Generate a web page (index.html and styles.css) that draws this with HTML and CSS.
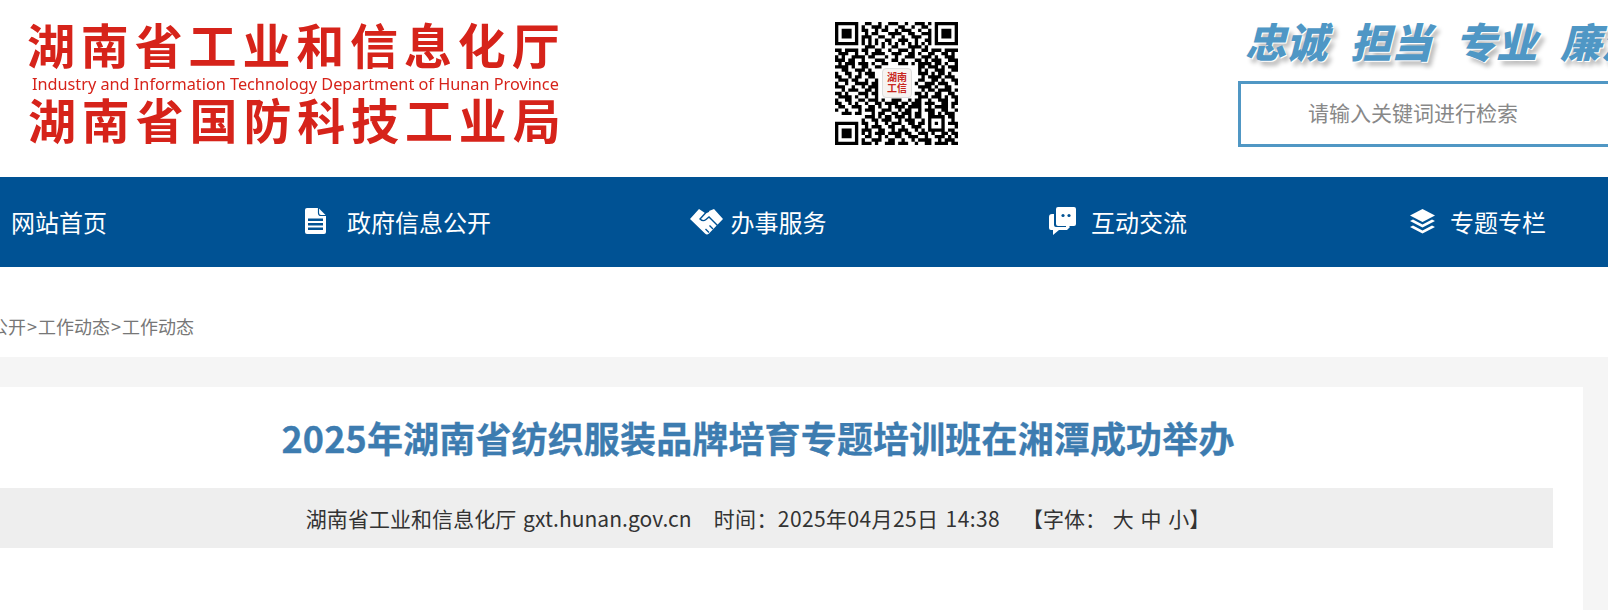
FILE: index.html
```html
<!DOCTYPE html>
<html lang="zh-CN">
<head>
  <meta charset="UTF-8" />
  <meta name="viewport" content="width=device-width, initial-scale=1.0" />
  <title>2025年湖南省纺织服装品牌培育专题培训班在湘潭成功举办</title>
  <link rel="stylesheet" href="styles.css">
</head>
<body>
  <header class="header">
    <div class="logo">
      <div class="logo-cn">湖南省工业和信息化厅</div>
      <div class="logo-en">Industry and Information Technology Department of Hunan Province</div>
      <div class="logo-cn logo-cn2">湖南省国防科技工业局</div>
    </div>

    <div class="qr">
      <svg class="qr-code" viewBox="0 0 37 37" width="123" height="123">
        <path fill="#000" fill-rule="evenodd" d="M0 0h7v7H0zM1 1v5h5V1zM2 2h3v3H2zM30 0h7v7h-7zM31 1v5h5V1zM32 2h3v3h-3zM0 30h7v7H0zM1 31v5h5v-5zM2 32h3v3H2z"/>
        <path stroke="#000" stroke-width="1" fill="none" d="M9 .5h2M13 .5h1M16 .5h3M21 .5h1M24 .5h3M28 .5h1
          M8 1.500h1M11 1.500h3M15 1.500h1M19 1.500h2M23 1.500h1M26 1.500h2
          M8 2.500h2M12 2.500h1M14 2.500h2M18 2.500h1M20 2.500h3M25 2.500h1M28 2.500h1
          M9 3.500h1M11 3.500h2M16 3.500h4M22 3.500h2M26 3.500h3
          M8 4.500h3M13 4.500h2M17 4.500h1M20 4.500h1M23 4.500h3M28 4.500h1
          M8 5.500h1M10 5.500h1M12 5.500h1M15 5.500h2M19 5.500h3M24 5.500h1M27 5.500h2
          M8 6.500h1M10 6.500h1M12 6.500h1M14 6.500h1M16 6.500h1M18 6.500h1M20 6.500h1M22 6.500h1M24 6.500h1M26 6.500h1M28 6.500h1
          M9 7.500h3M14 7.500h1M17 7.500h2M22 7.500h4M27 7.500h1
          M0 8.500h2M3 8.500h4M8 8.500h2M12 8.500h2M16 8.500h1M19 8.500h3M23 8.500h1M26 8.500h2M29 8.500h3M33 8.500h4
          M1 9.500h3M6 9.500h1M9 9.500h1M11 9.500h4M17 9.500h3M22 9.500h2M25 9.500h1M28 9.500h2M32 9.500h2M35 9.500h1
          M0 10.500h1M2 10.500h1M5 10.500h4M10 10.500h2M15 10.500h1M18 10.500h1M21 10.500h3M26 10.500h3M30 10.500h1M33 10.500h3
          M0 11.500h3M4 11.500h2M8 11.500h1M12 11.500h3M17 11.500h2M20 11.500h1M24 11.500h2M27 11.500h1M29 11.500h3M34 11.500h3
          M1 12.500h1M3 12.500h3M7 12.500h3M11 12.500h1M14 12.500h2M19 12.500h3M23 12.500h1M25 12.500h4M30 12.500h2M33 12.500h1M36 12.500h1
          M0 13.500h4M5 13.500h1M8 13.500h2M12 13.500h2M25 13.500h2M28 13.500h3M32 13.500h1M34 13.500h3
          M2 14.500h2M6 14.500h3M10 14.500h1M25 14.500h1M27 14.500h1M30 14.500h3M35 14.500h2
          M0 15.500h1M3 15.500h2M7 15.500h1M9 15.500h3M25 15.500h3M29 15.500h1M31 15.500h2M34 15.500h1
          M0 16.500h2M4 16.500h1M6 16.500h2M10 16.500h2M26 16.500h1M28 16.500h4M33 16.500h3
          M1 17.500h3M5 17.500h2M9 17.500h1M12 17.500h1M25 17.500h2M29 17.500h2M32 17.500h1M35 17.500h2
          M0 18.500h1M3 18.500h1M6 18.500h4M11 18.500h2M24 18.500h1M27 18.500h3M31 18.500h3M36 18.500h1
          M0 19.500h3M5 19.500h1M8 19.500h1M10 19.500h3M25 19.500h4M30 19.500h1M33 19.500h2
          M2 20.500h1M4 20.500h3M9 20.500h2M12 20.500h1M26 20.500h1M28 20.500h2M31 20.500h4M36 20.500h1
          M0 21.500h2M3 21.500h1M7 21.500h3M11 21.500h2M24 21.500h2M27 21.500h1M30 21.500h2M34 21.500h2
          M1 22.500h4M6 22.500h1M9 22.500h1M12 22.500h1M25 22.500h3M29 22.500h3M33 22.500h1M35 22.500h2
          M0 23.500h1M3 23.500h2M7 23.500h2M10 23.500h3M14 23.500h1M17 23.500h3M22 23.500h1M24 23.500h2M28 23.500h1M31 23.500h3M36 23.500h1
          M0 24.500h2M4 24.500h1M6 24.500h1M9 24.500h1M12 24.500h2M15 24.500h4M20 24.500h2M23 24.500h3M27 24.500h3M32 24.500h2M35 24.500h2
          M1 25.500h2M5 25.500h3M10 25.500h2M13 25.500h1M16 25.500h1M18 25.500h3M22 25.500h4M28 25.500h1M30 25.500h4M35 25.500h1
          M0 26.500h1M3 26.500h1M7 26.500h1M9 26.500h3M14 26.500h3M19 26.500h1M21 26.500h2M25 26.500h1M27 26.500h3M32 26.500h2M36 26.500h1
          M2 27.500h3M6 27.500h2M11 27.500h1M13 27.500h2M17 27.500h2M20 27.500h3M24 27.500h2M28 27.500h2M31 27.500h1M33 27.500h3
          M9 28.500h3M13 28.500h1M15 28.500h2M18 28.500h3M22 28.500h1M24 28.500h2M28 28.500h5M34 28.500h2
          M8 29.500h1M11 29.500h2M14 29.500h3M19 29.500h1M21 29.500h3M26 29.500h1M28 29.500h1M32 29.500h1M35 29.500h1
          M8 30.500h2M12 30.500h1M15 30.500h1M17 30.500h3M22 30.500h2M25 30.500h2M28 30.500h1M30 30.500h1M32 30.500h1M34 30.500h3
          M9 31.500h1M11 31.500h3M16 31.500h2M20 31.500h1M23 31.500h3M28 31.500h1M32 31.500h1M36 31.500h1
          M8 32.500h3M13 32.500h2M17 32.500h1M19 32.500h3M24 32.500h1M26 32.500h1M28 32.500h5M34 32.500h2
          M8 33.500h1M10 33.500h1M12 33.500h3M16 33.500h4M21 33.500h2M25 33.500h3M29 33.500h1M32 33.500h2M35 33.500h2
          M9 34.500h2M13 34.500h1M15 34.500h1M18 34.500h2M22 34.500h3M27 34.500h1M30 34.500h3M34 34.500h1M36 34.500h1
          M8 35.500h1M11 35.500h3M16 35.500h2M20 35.500h1M23 35.500h1M25 35.500h4M31 35.500h1M33 35.500h3
          M8 36.500h3M12 36.500h1M15 36.500h3M19 36.500h3M24 36.500h1M27 36.500h2M30 36.500h4M35 36.500h2"/>
      </svg>
      <div class="qr-badge">湖南<br>工信</div>
    </div>

    <div class="header-right">
      <div class="slogan">
        <span>忠诚</span>
        <span>担当</span>
        <span>专业</span>
        <span>廉洁</span>
      </div>
      <input class="search" type="text" placeholder="请输入关键词进行检索">
    </div>
  </header>

  <div class="wrap">
    <nav class="nav">
      <a class="nav-item">
        <svg class="icon-home" viewBox="0 0 26 26" width="26" height="26"><path fill="#fff" d="M13 2 0 13h4v11h6v-7h6v7h6V13h4z"/></svg>
        网站首页
      </a>
      <a class="nav-item">
        <svg class="icon-doc" viewBox="0 0 21 26" width="21" height="26">
          <path fill="#fff" d="M2 0h11.500L21 7.500V24a2 2 0 0 1-2 2H2a2 2 0 0 1-2-2V2a2 2 0 0 1 2-2z"/>
          <path fill="none" stroke="#005294" stroke-width="1.200" d="M13.500 0v5a2.500 2.500 0 0 0 2.500 2.500h5"/>
          <path fill="#005294" d="M3 10.500h15V13H3zM3 15h15v2.500H3zM3 19.500h15V22H3z"/>
        </svg>
        政府信息公开
      </a>
      <a class="nav-item">
        <svg class="icon-hand" viewBox="0 0 33 27" width="33" height="27">
          <path fill="#fff" d="M0 11 9 1l6 4 4-2 5-2 9 10-14 14.500q-2 2-4 0z"/>
          <path fill="none" stroke="#005294" stroke-width="1.400" d="M16 4.500 10 11q3 3 6 .5l3-2.500 8.500 8.500M23 21l-3.500-3.500M19 24.500 15.500 21M15 5l4-2"/>
        </svg>
        办事服务
      </a>
      <a class="nav-item">
        <svg class="icon-chat" viewBox="0 0 27 28" width="27" height="28">
          <path fill="#fff" d="M5 7H3a3 3 0 0 0-3 3v11a2 2 0 0 0 2 2h2v5l6-5h8l3-3H7a2 2 0 0 1-2-2z"/>
          <path fill="#fff" d="M9 0h16a2 2 0 0 1 2 2v15a2 2 0 0 1-2 2h-4l-4 4v-4H9a2 2 0 0 1-2-2V2a2 2 0 0 1 2-2z"/>
          <circle cx="14" cy="8.500" r="1.600" fill="#005294"/>
          <circle cx="20" cy="8.500" r="1.600" fill="#005294"/>
        </svg>
        互动交流
      </a>
      <a class="nav-item">
        <svg class="icon-layers" viewBox="0 0 25 25" width="25" height="25">
          <path fill="#fff" d="M12.500 0 25 6.500 12.500 13 0 6.500z"/>
          <path fill="#fff" d="m0 12 3-1.500 9.500 5 9.500-5 3 1.500-12.500 6.500z"/>
          <path fill="#fff" d="m0 18 3-1.500 9.500 5 9.500-5 3 1.500-12.500 6.500z"/>
        </svg>
        专题专栏
      </a>
    </nav>

    <div class="crumb">政府信息公开<span class="sep">&gt;</span>工作动态<span class="sep">&gt;</span>工作动态</div>

    <main class="band">
      <article class="card">
        <h1 class="title">2025年湖南省纺织服装品牌培育专题培训班在湘潭成功举办</h1>
        <div class="meta">
          <span class="source">湖南省工业和信息化厅 gxt.hunan.gov.cn</span>
          <span class="time">时间：2025年04月25日 14:38</span>
          <span class="size">【字体： 大 中 小】</span>
        </div>
      </article>
    </main>
  </div>
</body>
</html>
```

FILE: styles.css
```css
* {
  margin: 0;
  padding: 0;
  box-sizing: border-box;
  font-family: "Noto Sans CJK SC", "Noto Sans", sans-serif;
}

html, body {
  height: 100%;
  overflow: hidden;
  background: #fff;
}

.header {
  display: flex;
  height: 177px;
}

/* logo */
.logo {
  flex: 0 0 835px;
  padding: 19px 0 0 27px;
  color: #d6231a;
  filter: blur(0.4px);
}

.logo-cn {
  font-size: 48px;
  font-weight: 700;
  line-height: 48px;
  letter-spacing: 5.85px;
  white-space: nowrap;
}

.logo-cn2 {
  padding-left: 1px;
}

.logo-en {
  font-family: "Noto Sans", sans-serif;
  font-size: 16.25px;
  line-height: 20px;
  height: 27px;
  padding: 7px 0 0 5px;
  white-space: nowrap;
}

/* qr code */
.qr {
  position: relative;
  flex: 0 0 123px;
  height: 123px;
  margin-top: 22px;
}

.qr-code {
  display: block;
  filter: blur(0.45px);
}

.qr-badge {
  position: absolute;
  left: 47px;
  top: 46px;
  width: 30px;
  height: 30px;
  padding-top: 3px;
  background: #f7f3f1;
  border: 1px solid #ddd;
  border-radius: 4px;
  color: #c8261f;
  font-family: "Liberation Serif", "Noto Sans CJK SC", serif;
  font-size: 10px;
  font-weight: 700;
  line-height: 11px;
  text-align: center;
}

/* slogan + search */
.header-right {
  margin-left: 280px;
  flex: 0 0 500px;
}

.slogan {
  display: flex;
  gap: 23px;
  height: 81px;
  padding: 18px 0 0 7px;
  color: #4f97c5;
  font-size: 41px;
  font-weight: 900;
  font-style: italic;
  line-height: 44px;
  white-space: nowrap;
  text-shadow: 1px 1px 0 #fff, 4px 5px 4px #bdbdbd;
}

.search {
  display: block;
  width: 500px;
  height: 66px;
  padding: 0 0 4px 67px;
  border: 3px solid #5097c4;
  outline: none;
  font-size: 21px;
}

.search::placeholder {
  color: #888;
  opacity: 1;
}

.wrap {
  width: 1800px;
  margin-left: -142px;
}

.nav {
  display: grid;
  grid-template-columns: repeat(5, 360px);
  height: 90px;
  background: #005294;
}

.nav-item {
  display: flex;
  align-items: center;
  justify-content: center;
  padding-bottom: 2px;
  color: #fff;
  font-size: 24px;
}

.icon-home { margin-right: 16px; }
.icon-doc { margin-right: 21px; }
.icon-hand { margin-right: 8px; }
.icon-chat { margin-right: 15px; }
.icon-layers { margin-right: 15px; }

.crumb {
  height: 90px;
  padding: 45px 0 0 60px;
  color: #777;
  font-size: 18px;
  line-height: 28px;
}

.sep {
  margin: 0 1px;
}

.band {
  padding: 30px 75px 0;
  background: #f5f5f5;
}

.card {
  height: 400px;
  padding: 0 30px;
  background: #fff;
}

.title {
  height: 101px;
  padding-top: 3px;
  color: #3d7cb0;
  font-size: 36px;
  font-weight: 700;
  line-height: 95px;
  letter-spacing: 0.15px;
  text-align: center;
  -webkit-text-stroke: 0.3px #3d7cb0;
}

.meta {
  display: flex;
  justify-content: center;
  gap: 22px;
  height: 60px;
  background: #eee;
  color: #333;
  font-family: "Open Sans", "Noto Sans CJK SC", sans-serif;
  font-size: 21px;
  line-height: 60px;
  word-spacing: 2px;
}

.source {
  letter-spacing: 0.05px;
}

.time {
  letter-spacing: 0.4px;
}
```
